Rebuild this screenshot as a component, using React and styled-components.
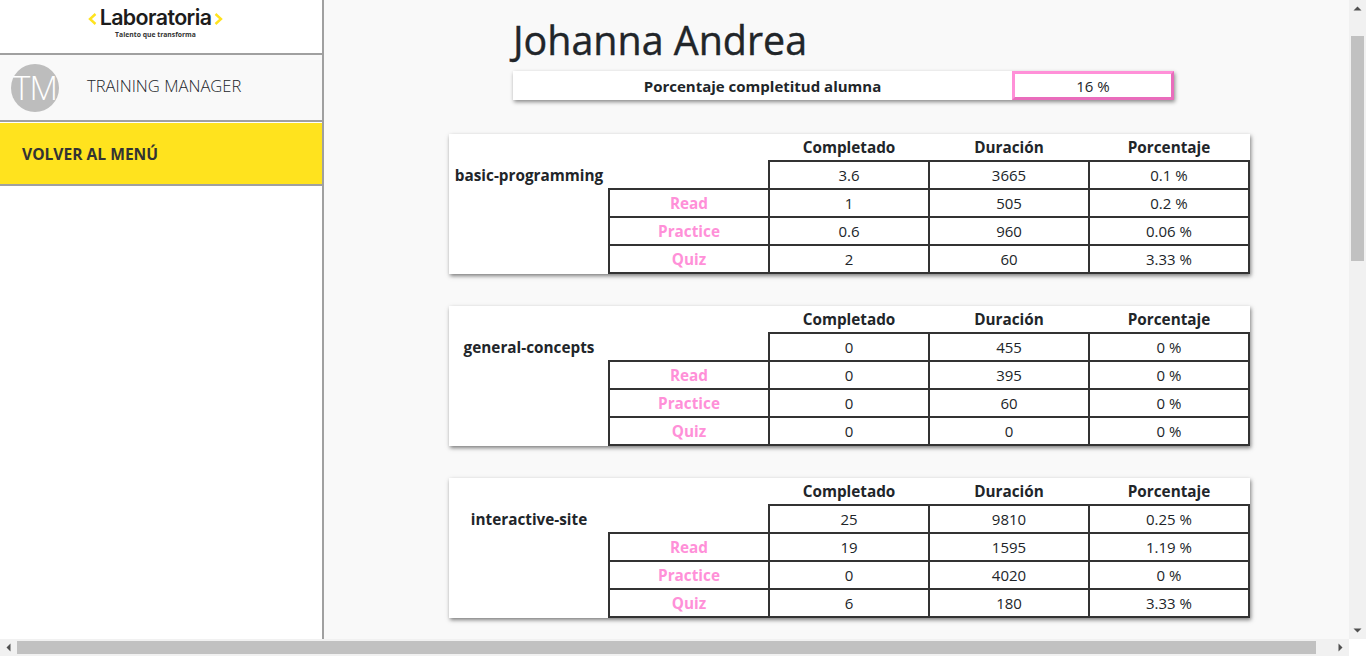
import React from "react";
import styled, { createGlobalStyle } from "styled-components";

const GlobalStyle = createGlobalStyle`
  html, body {
    margin: 0;
    height: 100%;
    overflow: hidden;
    background: #fff;
  }
  body {
    font-family: "Open Sans", "Noto Sans", sans-serif;
    color: #212529;
  }
`;

const Window = styled.div`
  width: 1366px;
  height: 656px;
  display: grid;
  grid-template-columns: 1349px 17px;
  grid-template-rows: 639px 17px;
  overflow: hidden;
`;

const Page = styled.div`
  display: flex;
  overflow: hidden;
  min-height: 0;
`;

const Sidebar = styled.aside`
  flex: 0 0 324px;
  box-sizing: border-box;
  background: #fff;
  border-right: 2px solid #a0a0a0;
`;

const LogoBox = styled.div`
  height: 49px;
  border-bottom: 2px solid #a0a0a0;
  display: flex;
  flex-direction: column;
  align-items: center;
  padding: 4px 11px 0 0;
`;

const LogoRow = styled.div`
  display: flex;
  align-items: center;
  gap: 3px;
  height: 26px;
`;

const LogoWord = styled.span`
  font-family: "Inter", sans-serif;
  font-size: 21.4px;
  font-weight: 600;
  letter-spacing: -0.6px;
  color: #1c1c1c;
  line-height: 26px;
`;

const LogoTag = styled.span`
  font-size: 6.8px;
  font-weight: 700;
  line-height: 9px;
  color: #333;
`;

const Profile = styled.div`
  height: 65px;
  background: #f9f9f9;
  border-bottom: 2px solid #a0a0a0;
  display: flex;
  align-items: center;
  padding-left: 11px;
`;

const Avatar = styled.div`
  width: 48px;
  height: 48px;
  border-radius: 50%;
  background: #bdbdbd;
  color: #fff;
  display: flex;
  align-items: center;
  justify-content: center;
  font-size: 33px;
  font-weight: 300;
  letter-spacing: -1px;
`;

const ProfileName = styled.span`
  margin: 0 0 4px 28px;
  font-size: 16.6px;
  font-weight: 300;
  color: #212529;
`;

const BackLink = styled.a`
  margin-top: 1px;
  height: 61px;
  background: #ffe31e;
  border-bottom: 2px solid #a0a0a0;
  display: flex;
  align-items: center;
  padding-left: 22px;
  font-size: 15.6px;
  font-weight: 700;
  color: #333;
`;

const Main = styled.main`
  flex: 1;
  min-width: 0;
  background: #f9f9f9;
  padding-left: 125px;
`;

const Title = styled.h1`
  margin: 15px 0 0 64px;
  font-size: 39.4px;
  font-weight: 400;
  line-height: 50px;
  color: #212529;
  -webkit-text-stroke: 0.4px #212529;
`;

const Summary = styled.div`
  margin: 6px 0 34px 64px;
  width: 661px;
  height: 29px;
  background: #fff;
  box-shadow: 1px 2px 4px rgba(0, 0, 0, 0.45);
  display: flex;
  font-size: 15px;
`;

const SummaryLabel = styled.div`
  flex: 1;
  display: flex;
  align-items: center;
  justify-content: center;
  font-weight: 700;
`;

const SummaryValue = styled.div`
  flex: 0 0 162px;
  box-sizing: border-box;
  border: 3px solid #ff90d8;
  border-bottom-color: #e96cbc;
  border-right-color: #e96cbc;
  display: flex;
  align-items: center;
  justify-content: center;
`;

const Course = styled.table`
  width: 800px;
  height: 140px;
  margin-bottom: 32px;
  border-collapse: collapse;
  table-layout: fixed;
  background: #fff;
  box-shadow: 1px 2px 4px rgba(0, 0, 0, 0.5);
  font-size: 15px;
`;

const HeadCell = styled.th`
  height: 26px;
  padding: 0;
  font-size: 15.3px;
  font-weight: 700;
  text-align: center;
`;

const NameCell = styled.th`
  padding: 0;
  font-size: 15.3px;
  font-weight: 700;
  text-align: center;
  white-space: nowrap;
`;

const LabelCell = styled.td`
  padding: 0;
  height: 26px;
  border: 2px solid #333;
  text-align: center;
  font-size: 15.3px;
  font-weight: 700;
  color: #ff90d8;
`;

const Cell = styled.td`
  padding: 0;
  height: 26px;
  border: 2px solid #333;
  text-align: center;
`;

const Track = styled.div`
  background: #f1f1f1;
  display: flex;
  flex-direction: ${(props) => (props.$vertical ? "column" : "row")};
  align-items: center;
`;

const ArrowBox = styled.div`
  flex: 0 0 17px;
  width: 17px;
  height: 17px;
  display: flex;
  align-items: center;
  justify-content: center;
`;

const VerticalGap = styled.div`
  flex: 0 0 19px;
`;

const VerticalThumb = styled.div`
  width: 13px;
  height: 225px;
  background: #c1c1c1;
`;

const HorizontalThumb = styled.div`
  width: 1299px;
  height: 13px;
  background: #c1c1c1;
`;

const Push = styled.div`
  flex: 1;
`;

const Corner = styled.div`
  background: #fff;
`;

const Arrow = ({ points }) => (
  <svg width="9" height="9" viewBox="0 0 9 9">
    <polygon points={points} fill="#505050" />
  </svg>
);

const ChevronIcon = styled.svg`
  margin-top: 4px;
`;

const Chevron = ({ points }) => (
  <ChevronIcon width="9" height="12" viewBox="0 0 9 12">
    <polyline points={points} fill="none" stroke="#ffe31e" strokeWidth="2.4" />
  </ChevronIcon>
);

const courses = [
  {
    name: "basic-programming",
    rows: [
      ["", "3.6", "3665", "0.1 %"],
      ["Read", "1", "505", "0.2 %"],
      ["Practice", "0.6", "960", "0.06 %"],
      ["Quiz", "2", "60", "3.33 %"],
    ],
  },
  {
    name: "general-concepts",
    rows: [
      ["", "0", "455", "0 %"],
      ["Read", "0", "395", "0 %"],
      ["Practice", "0", "60", "0 %"],
      ["Quiz", "0", "0", "0 %"],
    ],
  },
  {
    name: "interactive-site",
    rows: [
      ["", "25", "9810", "0.25 %"],
      ["Read", "19", "1595", "1.19 %"],
      ["Practice", "0", "4020", "0 %"],
      ["Quiz", "6", "180", "3.33 %"],
    ],
  },
];

const CourseTable = ({ course }) => (
  <Course>
    <colgroup>
      <col width="160" />
      <col width="160" />
      <col width="160" />
      <col width="160" />
      <col width="160" />
    </colgroup>
    <thead>
      <tr>
        <HeadCell />
        <HeadCell />
        <HeadCell>Completado</HeadCell>
        <HeadCell>Duración</HeadCell>
        <HeadCell>Porcentaje</HeadCell>
      </tr>
    </thead>
    <tbody>
      {course.rows.map(([label, done, length, percent], i) => (
        <tr key={i}>
          {i === 0 ? <NameCell>{course.name}</NameCell> : <td />}
          {label ? <LabelCell>{label}</LabelCell> : <td />}
          <Cell>{done}</Cell>
          <Cell>{length}</Cell>
          <Cell>{percent}</Cell>
        </tr>
      ))}
    </tbody>
  </Course>
);

export default function App() {
  return (
    <Window>
      <GlobalStyle />
      <Page>
        <Sidebar>
          <LogoBox>
            <LogoRow>
              <Chevron points="7.5,1 2,6 7.5,11" />
              <LogoWord>Laboratoria</LogoWord>
              <Chevron points="1.5,1 7,6 1.5,11" />
            </LogoRow>
            <LogoTag>Talento que transforma</LogoTag>
          </LogoBox>
          <Profile>
            <Avatar>TM</Avatar>
            <ProfileName>TRAINING MANAGER</ProfileName>
          </Profile>
          <BackLink>VOLVER AL MENÚ</BackLink>
        </Sidebar>
        <Main>
          <Title>Johanna Andrea</Title>
          <Summary>
            <SummaryLabel>Porcentaje completitud alumna</SummaryLabel>
            <SummaryValue>16 %</SummaryValue>
          </Summary>
          {courses.map((course) => (
            <CourseTable key={course.name} course={course} />
          ))}
        </Main>
      </Page>
      <Track $vertical>
        <ArrowBox>
          <Arrow points="0.5,6.5 8.5,6.5 4.5,2.5" />
        </ArrowBox>
        <VerticalGap />
        <VerticalThumb />
        <Push />
        <ArrowBox>
          <Arrow points="0.5,2.5 8.5,2.5 4.5,6.5" />
        </ArrowBox>
      </Track>
      <Track>
        <ArrowBox>
          <Arrow points="6.5,0.5 6.5,8.5 2.5,4.5" />
        </ArrowBox>
        <HorizontalThumb />
        <Push />
        <ArrowBox>
          <Arrow points="2.5,0.5 2.5,8.5 6.5,4.5" />
        </ArrowBox>
      </Track>
      <Corner />
    </Window>
  );
}
